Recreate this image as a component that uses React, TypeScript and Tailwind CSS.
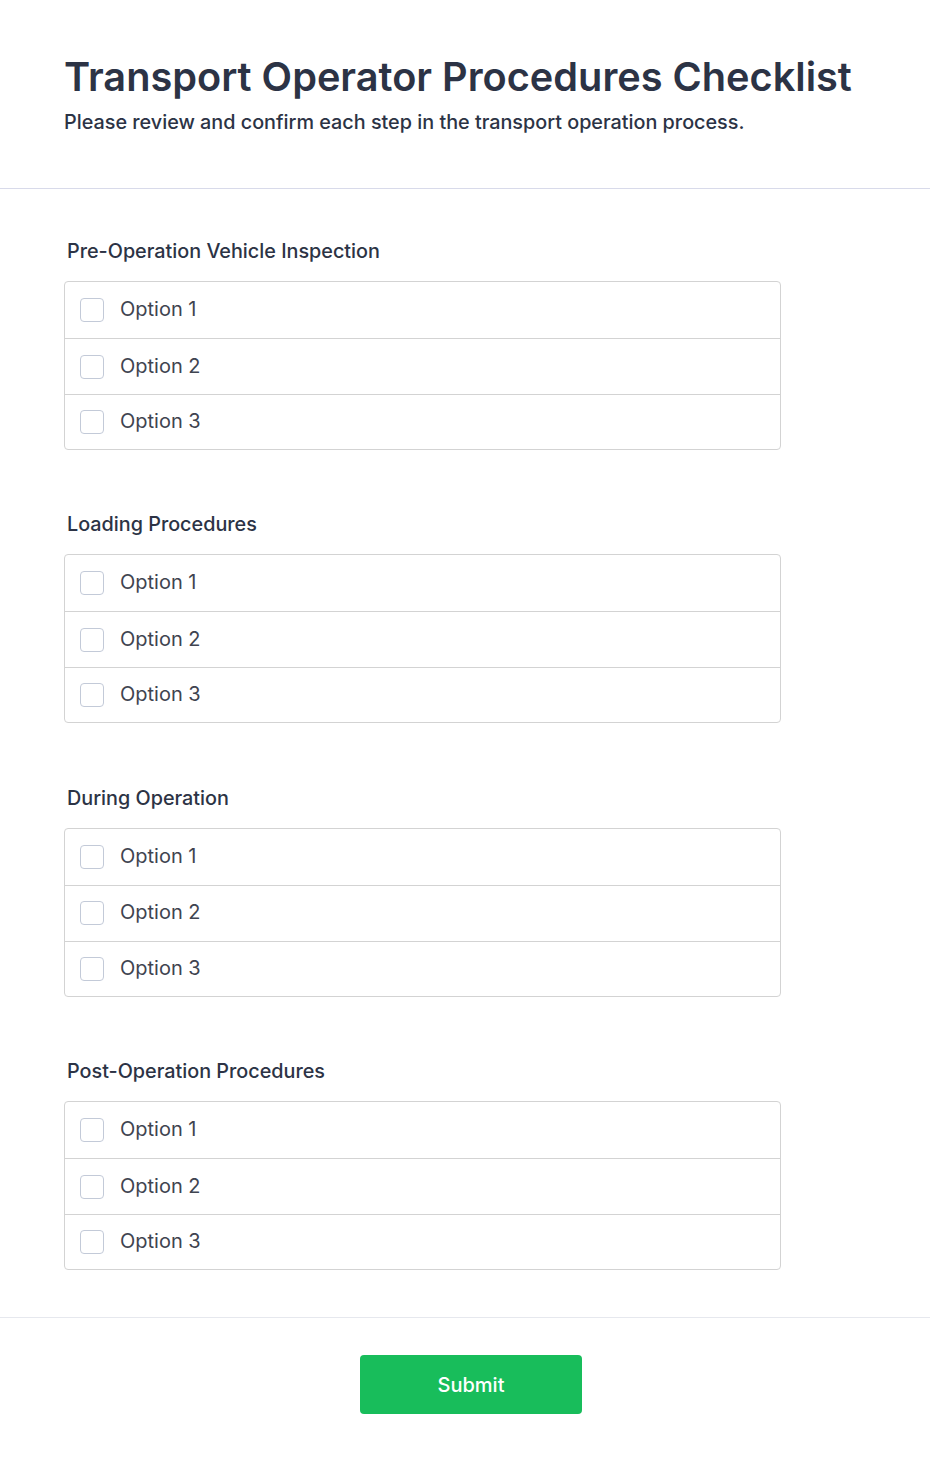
import React from "react";

const sections = [
  "Pre-Operation Vehicle Inspection",
  "Loading Procedures",
  "During Operation",
  "Post-Operation Procedures",
];

const rows = [
  { label: "Option 1", cls: "h-[56px]" },
  { label: "Option 2", cls: "h-[56px] border-t border-[#d3d3d3]" },
  { label: "Option 3", cls: "h-[55px] border-t border-[#d3d3d3]" },
];

function Section({ title }: { title: string }) {
  return (
    <div className="flex flex-col">
      <div className="text-[19.8px] leading-[24px] font-medium text-[#2c3345] pl-[3px]">{title}</div>
      <div className="mt-[18px] w-[717px] rounded-[4px] border border-[#d3d3d3] bg-white">
        {rows.map((r) => (
          <div key={r.label} className={`flex items-center pl-[15px] ${r.cls}`}>
            <span className="h-[24px] w-[24px] rounded-[4px] border border-[#c3cad8] bg-white" />
            <span className="ml-[16px] pb-[2px] text-[20px] leading-[24px] text-[#3f4450]">{r.label}</span>
          </div>
        ))}
      </div>
    </div>
  );
}

export default function App() {
  return (
    <div className="w-full bg-white" style={{ fontFamily: "Inter, 'Noto Sans', sans-serif" }}>
      <div className="px-[64px] pt-[53px] pb-[54px] border-b border-[#d8daea]">
        <h1 className="text-[39.7px] leading-[48px] font-semibold text-[#2c3345]">
          Transport Operator Procedures Checklist
        </h1>
        <p className="mt-[9px] text-[19.8px] leading-[24px] font-medium text-[#2c3345]">
          Please review and confirm each step in the transport operation process.
        </p>
      </div>
      <div className="flex flex-col gap-[62.4px] px-[64px] pt-[50px] pb-[47px] border-b border-[#e6e8ee]">
        {sections.map((s) => (
          <Section key={s} title={s} />
        ))}
      </div>
      <div className="flex justify-center pl-[12px] pt-[37px] pb-[50px]">
        <button className="h-[59px] w-[222px] rounded-[4px] bg-[#18bd5b] text-[20px] font-medium text-white">
          Submit
        </button>
      </div>
    </div>
  );
}
